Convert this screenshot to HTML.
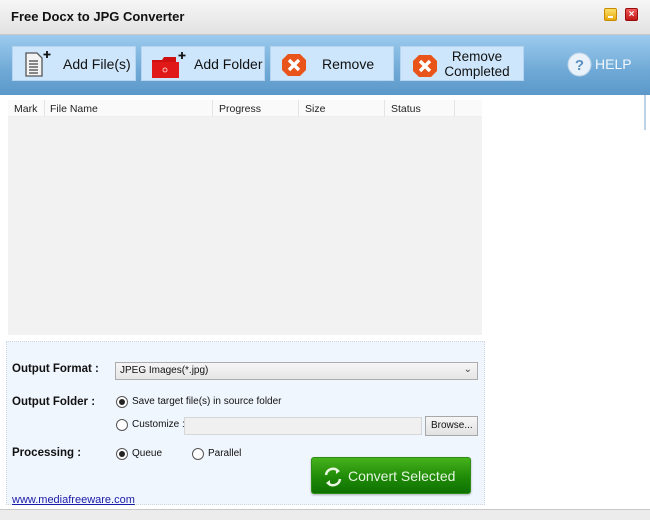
<!DOCTYPE html>
<html><head><style>
*{margin:0;padding:0;box-sizing:border-box}
body{width:650px;height:520px;overflow:hidden;background:#fff;font-family:"Liberation Sans",sans-serif;position:relative;font-size:11px;color:#111}
.abs{position:absolute;white-space:nowrap}
#title{left:0;top:0;width:650px;height:35px;background:linear-gradient(#f6f6f6,#e2e2e2);border-bottom:1px solid #c8c8c8}
#title span{position:absolute;left:11px;top:9px;font-weight:bold;font-size:13px}
#tb{left:0;top:35px;width:650px;height:60px;background:linear-gradient(#9ccbee,#6fa9d6 60%,#5b98c9)}
.btn{position:absolute;top:11px;height:35px;background:#cde6fb;border:1px solid #b4d4ef;font-size:14px;color:#111;white-space:nowrap}
.btn .t{position:absolute;text-align:center}
#tbl{left:8px;top:100px;width:474px;height:235px;background:#f2f2f2}
#hdr{left:8px;top:100px;width:474px;height:17px;background:#fafafa;border-bottom:1px solid #eee;font-size:10.5px;color:#222}
#hdr span{position:absolute;top:3px}
#panel{left:6px;top:341px;width:479px;height:164px;background:#f0f6fe;border:1px dotted #cfd6df}
.lbl{position:absolute;font-weight:bold;font-size:11.5px;white-space:nowrap}
.radio{position:absolute;width:12px;height:12px;border:1px solid #555;border-radius:50%;background:#fff}
.radio.on::after{content:"";position:absolute;left:2px;top:2px;width:6px;height:6px;border-radius:50%;background:#222}
.txt{position:absolute;font-size:10px;white-space:nowrap}
</style></head><body>
<div id="title" class="abs"><span>Free Docx to JPG Converter</span>
<div class="abs" style="left:604px;top:8px;width:13px;height:13px;background:linear-gradient(#fbe06a,#e7a80d);border:1px solid #c98a00;border-radius:2px"><div style="position:absolute;left:3px;top:7px;width:5px;height:2px;background:#fff"></div></div>
<div class="abs" style="left:625px;top:8px;width:13px;height:13px;background:linear-gradient(#f05a5a,#c11616);border:1px solid #9a0b0b;border-radius:2px;color:#fff;font-size:10px;line-height:11px;text-align:center;font-weight:bold">×</div>
</div>
<div id="tb" class="abs">
<div class="btn" style="left:12px;width:124px">
<svg class="abs" style="left:11px;top:3px" width="30" height="28"><path d="M2 3h11l5 5v18H2z" fill="#f4f4f4" stroke="#555" stroke-width="1.3"/><path d="M5 11h9M5 14h9M5 17h9M5 20h9M5 23h9" stroke="#444" stroke-width="1.2"/><path d="M23 1v7M19.5 4.5h7" stroke="#111" stroke-width="1.8"/></svg>
<span class="t" style="left:50px;top:9px">Add File(s)</span></div>
<div class="btn" style="left:141px;width:124px">
<svg class="abs" style="left:8px;top:4px" width="40" height="28"><path d="M2 9h10l2-3h12v21H2z" fill="#d01010"/><rect x="2" y="11" width="27" height="16" fill="#e01818"/><circle cx="15" cy="19" r="2" fill="none" stroke="#fbb" stroke-width="1"/><path d="M32 1v7M28.5 4.5h7" stroke="#111" stroke-width="1.8"/></svg>
<span class="t" style="left:52px;top:9px">Add Folder</span></div>
<div class="btn" style="left:270px;width:124px">
<svg class="abs" style="left:10px;top:6px" width="26" height="24"><path d="M7 1h12l6 6v10l-6 6H7l-6-6V7z" fill="#e8541a"/><path d="M8 7l10 10M18 7L8 17" stroke="#fff" stroke-width="3.4"/></svg>
<span class="t" style="left:51px;top:9px">Remove</span></div>
<div class="btn" style="left:400px;width:124px">
<svg class="abs" style="left:11px;top:7px" width="26" height="24"><path d="M7 1h12l6 6v10l-6 6H7l-6-6V7z" fill="#e8541a"/><path d="M8 7l10 10M18 7L8 17" stroke="#fff" stroke-width="3.4"/></svg>
<span class="t" style="left:38px;top:2px;width:76px;line-height:15px;font-size:13.5px">Remove<br>Completed</span></div>
<svg class="abs" style="left:567px;top:17px" width="25" height="25"><circle cx="12.5" cy="12.5" r="11.5" fill="#e9f2fa" stroke="#bcd3e6"/><text x="12.5" y="18" text-anchor="middle" font-family="Liberation Sans" font-weight="bold" font-size="15" fill="#5a90c0">?</text></svg>
<span class="abs" style="left:595px;top:21px;color:#f2f7fc;font-size:14px">HELP</span>
</div>
<div class="abs" style="left:644px;top:95px;width:2px;height:35px;background:#bcd2e6"></div>
<div id="tbl" class="abs"></div>
<div id="hdr" class="abs"><span style="left:6px">Mark</span><span style="left:42px">File Name</span><span style="left:211px">Progress</span><span style="left:297px">Size</span><span style="left:383px">Status</span>
<div class="abs" style="left:36px;top:0;width:1px;height:17px;background:#e4e4e4"></div>
<div class="abs" style="left:204px;top:0;width:1px;height:17px;background:#e4e4e4"></div>
<div class="abs" style="left:290px;top:0;width:1px;height:17px;background:#e4e4e4"></div>
<div class="abs" style="left:376px;top:0;width:1px;height:17px;background:#e4e4e4"></div>
<div class="abs" style="left:446px;top:0;width:1px;height:17px;background:#e4e4e4"></div>
</div>
<div id="panel" class="abs"></div>
<span class="lbl" style="left:12px;top:363px">Output Format :</span>
<div class="abs" style="left:115px;top:362px;width:363px;height:18px;background:linear-gradient(#f6f6f6,#e6e6e6);border:1px solid #acacac"><span class="txt" style="left:4px;top:2px">JPEG Images(*.jpg)</span><span class="txt" style="right:5px;top:1px;color:#444">⌄</span></div>
<span class="lbl" style="left:12px;top:396px">Output Folder :</span>
<div class="radio on" style="left:116px;top:396px"></div><span class="txt" style="left:132px;top:396px">Save target file(s) in source folder</span>
<div class="radio" style="left:116px;top:419px"></div><span class="txt" style="left:132px;top:419px">Customize :</span>
<div class="abs" style="left:184px;top:417px;width:238px;height:18px;background:#f0f0f0;border:1px solid #d6d6d6"></div>
<div class="abs" style="left:425px;top:416px;width:53px;height:20px;background:linear-gradient(#f6f6f6,#e2e2e2);border:1px solid #a8a8a8"><span class="txt" style="left:5px;top:3px">Browse...</span></div>
<span class="lbl" style="left:12px;top:447px">Processing :</span>
<div class="radio on" style="left:116px;top:448px"></div><span class="txt" style="left:132px;top:448px">Queue</span>
<div class="radio" style="left:192px;top:448px"></div><span class="txt" style="left:208px;top:448px">Parallel</span>
<div class="abs" style="left:311px;top:457px;width:160px;height:37px;background:linear-gradient(#46b21c,#1f8a07 55%,#0f7203);border:1px solid #2d8d14;border-radius:3px;box-shadow:0 1px 2px rgba(0,0,0,.3)">
<svg class="abs" style="left:10px;top:8px" width="22" height="22"><path d="M4 9a7 7 0 0 1 12-4" fill="none" stroke="#e8f5e0" stroke-width="2.5"/><path d="M18 13a7 7 0 0 1-12 4" fill="none" stroke="#e8f5e0" stroke-width="2.5"/><path d="M14 2l4 3-4 3z M8 20l-4-3 4-3z" fill="#e8f5e0"/></svg>
<span class="abs" style="left:36px;top:10px;color:#e6f5e0;font-size:14px">Convert Selected</span></div>
<span class="abs" style="left:12px;top:494px;color:#1a1aa8;text-decoration:underline;font-size:11px">www.mediafreeware.com</span>
<div class="abs" style="left:0;top:509px;width:650px;height:11px;background:#ececec;border-top:1px solid #c8c8c8"></div>
</body></html>
